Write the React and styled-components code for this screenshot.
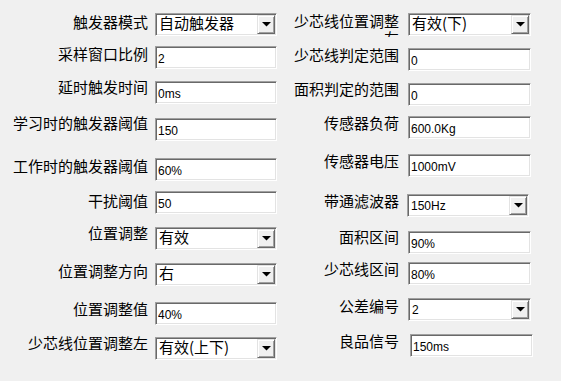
import React from "react";
import styled, { createGlobalStyle } from "styled-components";

const CJK = `"Noto Sans CJK SC", "Noto Sans CJK TC", sans-serif`;
const LATIN = `"Liberation Sans", Arial, sans-serif`;
const BOX_H = 23;

const GlobalStyle = createGlobalStyle`
  html, body {
    margin: 0;
    padding: 0;
    background: #f0f0f0;
  }

  body {
    font-family: ${CJK};
    color: #000;
  }
`;

const Form = styled.div`
  display: flex;
  align-items: flex-start;
  width: 561px;
  height: 381px;
`;

const Column = styled.div`
  display: flex;
  flex-direction: column;
  margin-left: ${(p) => p.$offset}px;
`;

const Row = styled.div`
  display: flex;
  align-items: flex-start;
  height: ${BOX_H}px;
  margin-top: ${(p) => p.$gap}px;
`;

const Label = styled.div`
  flex: none;
  width: ${(p) => p.$width}px;
  margin-top: ${(p) => p.$dy}px;
  margin-right: ${(p) => p.$space}px;
  text-align: right;
  font-family: ${CJK};
  font-size: 15px;
  line-height: 17px;
  white-space: ${(p) => (p.$wrap ? "normal" : "nowrap")};
  max-height: ${(p) => (p.$wrap ? "25px" : "none")};
  overflow: ${(p) => (p.$wrap ? "hidden" : "visible")};
`;

const Field = styled.input`
  box-sizing: border-box;
  flex: none;
  width: ${(p) => p.$w}px;
  height: ${BOX_H}px;
  margin: 0 0 0 ${(p) => p.$dx}px;
  padding: 2px 0 0 2px;
  border: 1px solid;
  border-color: #a0a0a0 #fff #fff #a0a0a0;
  box-shadow: inset 1px 1px 0 #696969, inset -1px -1px 0 #e3e3e3;
  background: #fff;
  font-family: ${LATIN};
  font-size: 12px;
  color: #000;
  outline: none;
  border-radius: 0;
`;

const Combo = styled.div`
  box-sizing: border-box;
  flex: none;
  display: flex;
  width: ${(p) => p.$w}px;
  height: ${BOX_H}px;
  margin-left: ${(p) => p.$dx}px;
  padding: 1px;
  border: 1px solid;
  border-color: #a0a0a0 #fff #fff #a0a0a0;
  box-shadow: inset 1px 1px 0 #696969, inset -1px -1px 0 #e3e3e3;
  background: #fff;
`;

const ComboValue = styled.span`
  flex: 1;
  min-width: 0;
  padding: ${(p) => (p.$latin ? "3px 0 0 2px" : "0 0 0 2px")};
  font-family: ${(p) => (p.$latin ? LATIN : CJK)};
  font-size: ${(p) => (p.$latin ? 12 : 15)}px;
  line-height: 15px;
  white-space: nowrap;
`;

const DropButton = styled.span`
  box-sizing: border-box;
  flex: none;
  width: 18px;
  display: flex;
  align-items: center;
  justify-content: center;
  background: #f0f0f0;
  border: 1px solid;
  border-color: #e3e3e3 #696969 #696969 #e3e3e3;
  box-shadow: inset 1px 1px 0 #fff, inset -1px -1px 0 #a0a0a0;
`;

const Arrow = () => (
  <svg width="9" height="5" viewBox="0 0 9 5">
    <polygon points="0,0 9,0 4.5,4.5" fill="#000" />
  </svg>
);

const leftRows = [
  { label: "触发器模式", combo: true, value: "自动触发器", top: 13, dy: 3 },
  { label: "采样窗口比例", value: "2", top: 46, dy: 2 },
  { label: "延时触发时间", value: "0ms", top: 81, dy: 0 },
  { label: "学习时的触发器阈值", value: "150", top: 118, dy: -1 },
  { label: "工作时的触发器阈值", value: "60%", top: 158, dy: 2 },
  { label: "干扰阈值", value: "50", top: 191, dy: 4 },
  { label: "位置调整", combo: true, value: "有效", top: 227, dy: 0 },
  { label: "位置调整方向", combo: true, value: "右", top: 263, dy: 2 },
  { label: "位置调整值", value: "40%", top: 302, dy: 1 },
  { label: "少芯线位置调整左", combo: true, value: "有效(上下)", top: 337, dy: 0 },
];

const rightRows = [
  { label: "少芯线位置调整左", combo: true, value: "有效(下)", top: 13, dy: 2, wrap: true },
  { label: "少芯线判定范围", value: "0", top: 48, dy: 1 },
  { label: "面积判定的范围", value: "0", top: 83, dy: 0 },
  { label: "传感器负荷", value: "600.0Kg", top: 116, dy: 1 },
  { label: "传感器电压", value: "1000mV", top: 154, dy: 1 },
  { label: "带通滤波器", combo: true, latin: true, value: "150Hz", top: 194, dy: 1, dx: -1, w: 122 },
  { label: "面积区间", value: "90%", top: 231, dy: 0 },
  { label: "少芯线区间", value: "80%", top: 262, dy: 1 },
  { label: "公差编号", combo: true, latin: true, value: "2", top: 298, dy: 2 },
  { label: "良品信号", value: "150ms", top: 334, dy: 1, dx: 2 },
];

const FieldColumn = ({ rows, offset, labelWidth, space, width }) => (
  <Column $offset={offset}>
    {rows.map((row, i) => {
      const gap = i === 0 ? row.top : row.top - (rows[i - 1].top + BOX_H);
      const w = row.w || width;
      const dx = row.dx || 0;
      return (
        <Row key={row.label + i} $gap={gap}>
          <Label $width={labelWidth} $space={space} $dy={row.dy - 3} $wrap={row.wrap}>
            {row.label}
          </Label>
          {row.combo ? (
            <Combo $w={w} $dx={dx}>
              <ComboValue $latin={row.latin}>{row.value}</ComboValue>
              <DropButton>
                <Arrow />
              </DropButton>
            </Combo>
          ) : (
            <Field $w={w} $dx={dx} value={row.value} readOnly />
          )}
        </Row>
      );
    })}
  </Column>
);

const App = () => (
  <>
    <GlobalStyle />
    <Form>
      <FieldColumn rows={leftRows} offset={0} labelWidth={148} space={7} width={122} />
      <FieldColumn rows={rightRows} offset={16} labelWidth={106} space={9} width={123} />
    </Form>
  </>
);

export default App;
